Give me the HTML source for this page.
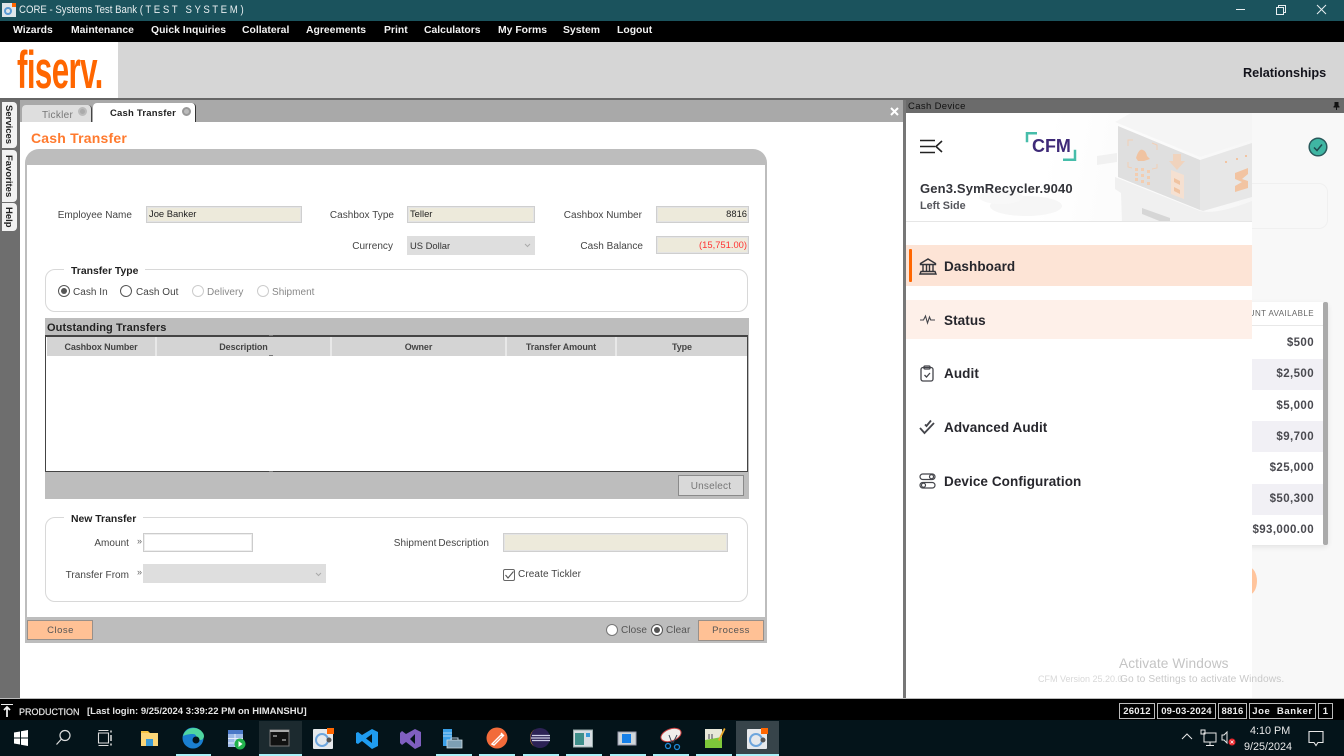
<!DOCTYPE html>
<html><head><meta charset="utf-8"><title>CORE</title>
<style>
html,body{margin:0;padding:0;width:1344px;height:756px;overflow:hidden;background:#fff;font-family:"Liberation Sans",sans-serif}
.a{position:absolute;box-sizing:border-box}
.t{position:absolute;white-space:nowrap;line-height:1}
.m{font-weight:bold;font-size:10.4px;color:#f2f2f2;top:26px}
.l{font-size:10px;color:#444;letter-spacing:.03px;top:0}
.r{text-align:right}
.f{position:absolute;box-sizing:border-box;background:#edeadb;border:1px solid #cfcfcf;box-shadow:0 0 0 1px #e4e4e4 inset;font-size:9.4px;color:#222;line-height:14px;padding:0 2px}
.sel{position:absolute;box-sizing:border-box;background:#dedede;font-size:9.4px;color:#333;line-height:19px;padding:0 3px}
.box{position:absolute;box-sizing:border-box;border:1.5px solid #d8d8d8;border-radius:10px;background:#fff}
.leg{position:absolute;background:#fff;font-weight:bold;font-size:10.4px;color:#222;padding:0 7px;line-height:12px;height:12px;border-radius:0 0 6px 6px}
.rad{position:absolute;width:12px;height:12px;box-sizing:border-box;border:1.4px solid #555;border-radius:50%;background:#fff}
.rad.on::after{content:"";position:absolute;left:1.6px;top:1.6px;width:6px;height:6px;border-radius:50%;background:#555}
.rad.off{border-color:#ccc}
.th{position:absolute;top:337px;height:19px;background:#d4d4d4;border-right:2px solid #e8e8e8;box-sizing:border-box;font-weight:bold;font-size:9px;letter-spacing:-.1px;color:#444;text-align:center;line-height:21px}
.btn{position:absolute;box-sizing:border-box;background:#ffc195;border:1.5px solid #98908a;font-size:9.5px;color:#555;letter-spacing:.5px;text-align:center;line-height:20px}
.nav{position:absolute;font-weight:bold;font-size:13.5px;color:#26262c;letter-spacing:.08px;line-height:1;white-space:nowrap;left:944px}
.amt{position:absolute;right:30px;font-weight:bold;font-size:11.5px;color:#4a4a50;letter-spacing:.4px;line-height:1;white-space:nowrap}
.sb{position:absolute;top:703px;height:16px;box-sizing:border-box;border:1px solid #bbb;color:#eee;font-weight:bold;font-size:9.5px;letter-spacing:.2px;text-align:center;line-height:15px;background:#000}
.ul{position:absolute;top:754px;height:2px;background:#a8f0f8}
svg{position:absolute;overflow:visible}
.st{writing-mode:vertical-rl;font-weight:bold;font-size:9.5px;color:#222;position:absolute;left:2px;width:15px;background:#f2f2f2;box-sizing:border-box;text-align:center;line-height:12px;padding-right:3px;border-radius:0 4px 4px 0}
</style></head><body>

<!-- title bar -->
<div class="a" style="left:0;top:0;width:1344px;height:21px;background:#1b535d"></div>
<div class="a" style="left:2px;top:3px;width:14px;height:14px;background:#dfe6ea"></div>
<div class="a" style="left:4px;top:7px;width:8px;height:8px;border:2px solid #5b9bd5;border-radius:50%"></div>
<div class="a" style="left:12px;top:3px;width:4px;height:4px;background:#f60"></div>
<div class="t" style="left:19px;top:5px;font-size:11px;color:#e8eef0;transform-origin:0 0;transform:scaleX(.875)">CORE - Systems Test Bank ( T E S T &nbsp; S Y S T E M )</div>
<svg style="left:0;top:0" width="1344" height="21" fill="none" stroke="#e8eef0" stroke-width="1">
<path d="M1236 9.5h9"/><path d="M1276.500 7.500h7v7h-7z M1278.500 7.500v-2h7v7h-2"/><path d="M1317 5l9 9M1326 5l-9 9"/></svg>

<!-- menu -->
<div class="a" style="left:0;top:21px;width:1344px;height:21px;background:#000"></div>
<div class="t m" style="left:13px">Wizards</div><div class="t m" style="left:71px">Maintenance</div><div class="t m" style="left:151px">Quick Inquiries</div><div class="t m" style="left:242px">Collateral</div><div class="t m" style="left:306px">Agreements</div><div class="t m" style="left:384px">Print</div><div class="t m" style="left:424px">Calculators</div><div class="t m" style="left:498px">My Forms</div><div class="t m" style="left:563px">System</div><div class="t m" style="left:617px">Logout</div>

<!-- header -->
<div class="a" style="left:0;top:42px;width:1344px;height:57px;background:#d6d6d6"></div>
<div class="a" style="left:0;top:42px;width:118px;height:57px;background:#fff"></div>
<div class="t" style="left:17px;top:44px;font-size:53px;font-weight:bold;color:#f60;letter-spacing:-1px;transform-origin:0 0;transform:scaleX(.59)">fiserv.</div>
<div class="t" style="left:1243px;top:66.500px;font-size:12.7px;font-weight:bold;color:#14141c">Relationships</div>
<div class="a" style="left:0;top:98px;width:1344px;height:2px;background:#666"></div>

<!-- left rail -->
<div class="a" style="left:0;top:100px;width:20px;height:599px;background:#6e6e6e"></div>
<div class="st" style="top:102px;height:46px">Services</div>
<div class="st" style="top:150px;height:52px">Favorites</div>
<div class="st" style="top:203px;height:28px">Help</div>

<!-- tab strip -->
<div class="a" style="left:20px;top:100px;width:883px;height:22px;background:#a9a9a9"></div>
<div class="a" style="left:22px;top:105px;width:70px;height:17px;background:#dedede;border-right:1px solid #444;border-radius:4px 4px 0 0"></div>
<div class="t" style="left:42px;top:111px;font-size:10px;color:#777;letter-spacing:.3px">Tickler</div>
<div class="a" style="left:78px;top:107px;width:9px;height:9px;border-radius:50%;background:#aaa;border:2px solid #bbb"></div>
<div class="a" style="left:93px;top:103px;width:103px;height:19px;background:#fff;border-right:1px solid #333;border-radius:4px 4px 0 0"></div>
<div class="t" style="left:110px;top:108.500px;font-size:9.5px;font-weight:bold;color:#222;letter-spacing:.2px">Cash Transfer</div>
<div class="a" style="left:182px;top:107px;width:9px;height:9px;border-radius:50%;background:#bbb;border:2px solid #999"></div>
<svg style="left:890px;top:107px" width="9" height="9" stroke="#fff" stroke-width="2"><path d="M1 1l7 7M8 1l-7 7"/></svg>

<!-- splitter -->
<div class="a" style="left:903px;top:100px;width:3px;height:599px;background:#777"></div>

<div class="t" style="left:31px;top:131px;font-size:14px;font-weight:bold;color:#ff7a2e;letter-spacing:.2px">Cash Transfer</div>

<!-- form frame -->
<div class="a" style="left:25px;top:149px;width:742px;height:494px;background:#bdbdbd;border-radius:14px 14px 0 0"></div>
<div class="a" style="left:27px;top:165px;width:738px;height:452px;background:#fff"></div>

<div class="t l r" style="left:40px;width:92px;top:210.500px">Employee Name</div>
<div class="f" style="left:146px;top:206px;width:156px;height:17px">Joe Banker</div>
<div class="t l r" style="left:310px;width:84px;top:210.500px">Cashbox Type</div>
<div class="f" style="left:407px;top:206px;width:128px;height:17px">Teller</div>
<div class="t l r" style="left:550px;width:92px;top:210.500px">Cashbox Number</div>
<div class="f r" style="left:656px;top:206px;width:93px;height:17px;padding-right:1px">8816</div>
<div class="t l r" style="left:340px;width:53px;top:241.500px">Currency</div>
<div class="sel" style="left:407px;top:236px;width:128px;height:19px">US Dollar</div>
<svg style="left:524px;top:243px" width="7" height="5" fill="none" stroke="#aaa"><path d="M1 1l2.500 2.500L6 1"/></svg>
<div class="t l r" style="left:560px;width:83px;top:241.500px">Cash Balance</div>
<div class="f r" style="left:656px;top:236px;width:93px;height:18px;color:#f33;padding-right:1px;line-height:15px">(15,751.00)</div>

<!-- transfer type -->
<div class="box" style="left:45px;top:269px;width:703px;height:43px"></div>
<div class="leg" style="left:64px;top:265.500px">Transfer Type</div>
<div class="rad on" style="left:58px;top:285px"></div><div class="t l" style="left:73px;top:287.500px">Cash In</div>
<div class="rad" style="left:120px;top:285px"></div><div class="t l" style="left:136px;top:287.500px">Cash Out</div>
<div class="rad off" style="left:192px;top:285px"></div><div class="t l" style="left:207px;top:287.500px;color:#888">Delivery</div>
<div class="rad off" style="left:257px;top:285px"></div><div class="t l" style="left:272px;top:287.500px;color:#888">Shipment</div>

<!-- outstanding -->
<div class="a" style="left:45px;top:318px;width:704px;height:181px;background:#bdbdbd"></div>
<div class="t" style="left:47px;top:323px;font-size:11px;font-weight:bold;color:#222;letter-spacing:.1px">Outstanding Transfers</div>
<div class="a" style="left:45px;top:335px;width:703px;height:137px;background:#fff;border:1px solid #444;border-top-width:2px"></div>
<div class="th" style="left:47px;width:110px">Cashbox Number</div>
<div class="th" style="left:157px;width:175px">Description</div>
<div class="th" style="left:332px;width:175px">Owner</div>
<div class="th" style="left:507px;width:110px">Transfer Amount</div>
<div class="th" style="left:617px;width:130px;border:none">Type</div>
<div class="a" style="left:269px;top:335px;width:4px;height:1px;background:#777"></div>
<div class="a" style="left:269px;top:355px;width:4px;height:1px;background:#777"></div>
<div class="a" style="left:269px;top:471px;width:4px;height:1px;background:#777"></div>
<div class="a" style="left:678px;top:475px;width:66px;height:21px;background:#d9d9d9;border:1.500px solid #8a8a8a;font-size:10px;color:#777;letter-spacing:.2px;text-align:center;line-height:21px">Unselect</div>

<!-- new transfer -->
<div class="box" style="left:45px;top:517px;width:703px;height:85px"></div>
<div class="leg" style="left:64px;top:513.500px">New Transfer</div>
<div class="t l r" style="left:80px;width:49px;top:538.500px">Amount</div>
<div class="t" style="left:137px;top:537px;font-size:9px;color:#666">»</div>
<div class="a" style="left:143px;top:533px;width:110px;height:19px;background:#fff;border:1px solid #ccc;box-shadow:0 0 0 1px #eee inset"></div>
<div class="t l r" style="left:50px;width:79px;top:570.500px">Transfer From</div>
<div class="t" style="left:137px;top:568px;font-size:9px;color:#666">»</div>
<div class="sel" style="left:143px;top:564px;width:183px;height:19px"></div>
<svg style="left:315px;top:572px" width="7" height="5" fill="none" stroke="#aaa"><path d="M1 1l2.500 2.500L6 1"/></svg>
<div class="t l r" style="left:380px;width:109px;top:538.500px;word-spacing:-1px;letter-spacing:.06px">Shipment Description</div>
<div class="f" style="left:503px;top:533px;width:225px;height:19px"></div>
<div class="a" style="left:503px;top:569px;width:12px;height:12px;background:#fff;border:1px solid #666;border-radius:2px"></div>
<svg style="left:503px;top:569px" width="12" height="12" fill="none" stroke="#555" stroke-width="1.100"><path d="M2.500 6l2.500 3 5.500-6.500"/></svg>
<div class="t l" style="left:518px;top:570px;letter-spacing:.1px">Create Tickler</div>

<!-- footer band -->
<div class="btn" style="left:27px;top:620px;width:68px;height:20px;padding-left:1px;width:66px">Close</div>
<div class="rad" style="left:606px;top:624px;border-color:#777"></div><div class="t l" style="left:621px;top:626px;color:#555;letter-spacing:.1px">Close</div>
<div class="rad on" style="left:651px;top:624px"></div><div class="t l" style="left:666px;top:626px;color:#555;letter-spacing:.1px">Clear</div>
<div class="btn" style="left:698px;top:620px;width:66px;height:21px">Process</div>

<!-- right panel -->
<div class="a" style="left:906px;top:100px;width:438px;height:13px;background:#6b6b6b"></div>
<div class="t" style="left:908px;top:101.500px;font-size:9.5px;color:#111;letter-spacing:.35px">Cash Device</div>
<svg style="left:1333px;top:102px" width="7" height="8" fill="#111"><path d="M1.500 0h4v3.500l1 1v1H4v2.500H3V5.500H.5v-1l1-1z"/></svg>
<div class="a" style="left:906px;top:113px;width:438px;height:586px;background:#f8f8f8"></div>

<div class="a" style="left:1252px;top:183px;width:76px;height:46px;border:1.500px solid #f0f0f0;border-left:none;border-radius:0 9px 9px 0"></div>
<svg style="left:1308px;top:137px" width="20" height="20"><circle cx="10" cy="10" r="8.800" fill="#3fb6a3" stroke="#2a5a5c" stroke-width="1.500"/><path d="M6 10.500l3 3 5-6" fill="none" stroke="#1f4a4e" stroke-width="1.500"/></svg>

<!-- table behind -->
<div class="a" style="left:1240px;top:302px;width:88px;height:243px;background:#fff;border-radius:4px;box-shadow:0 2px 6px rgba(0,0,0,.09)"></div>
<div class="a" style="left:1240px;top:325px;width:83px;height:1px;background:#e8e8e8"></div>
<div class="a" style="left:1240px;top:359px;width:83px;height:31px;background:#f1f0f5"></div>
<div class="a" style="left:1240px;top:421px;width:83px;height:31px;background:#f1f0f5"></div>
<div class="a" style="left:1240px;top:484px;width:83px;height:31px;background:#f1f0f5"></div>
<div class="a" style="left:1323px;top:302px;width:5px;height:243px;background:#aaa;border-radius:2px"></div>
<div class="t" style="left:1252px;top:310px;width:62px;overflow:hidden;font-size:8px;color:#666;letter-spacing:.4px;text-align:right;direction:rtl">AMOUNT AVAILABLE</div>
<div class="amt" style="top:338px">$500</div>
<div class="amt" style="top:369px">$2,500</div>
<div class="amt" style="top:400.500px">$5,000</div>
<div class="amt" style="top:432px">$9,700</div>
<div class="amt" style="top:463px">$25,000</div>
<div class="amt" style="top:494px">$50,300</div>
<div class="amt" style="top:525px">$93,000.00</div>
<div class="a" style="left:1240px;top:567px;width:17px;height:28px;background:#ffc49c;border-radius:50%"></div>

<!-- side nav -->
<div class="a" style="left:906px;top:113px;width:346px;height:586px;background:#fff"></div>
<div class="a" style="left:906px;top:113px;width:346px;height:109px;background:linear-gradient(100deg,#fff 40%,#f6f6f6 100%);border-bottom:1px solid #e6e6e6;overflow:hidden">
<svg style="left:0;top:0" width="346" height="109">
<ellipse cx="120" cy="93" rx="36" ry="10" fill="#f6f6f6"/>
<ellipse cx="95" cy="84" rx="22" ry="7" fill="#f8f8f8"/>
<path d="M191 43l20-3v9l-20 3z" fill="#f1f1f1"/>
<path d="M209 9L294 44 346 27V0H225z" fill="#f5f5f5"/>
<path d="M212 13L294 47V97L212 64z" fill="#dfdfdf"/>
<path d="M294 47L346 30V84L297 98 294 97z" fill="#e7e7e7"/>
<path d="M209 64L294 98Q310 102 346 88V109H216L215 80 209 76z" fill="#f0f0f0"/>
<path d="M236 95l28 10v4h-8l-20-8z" fill="#d6d6d6"/>
<g opacity=".85">
<g fill="none" stroke="#f5cdb0"><path d="M222 33v-6h5M246 30l5 2v5M222 49v5l4 1M251 51v4l-5 1"/></g>
<path d="M230 45q3-10 7-8 3 1 4 6l3 3-6 2h-6z" fill="#f4bf97"/>
<path d="M229 55h3v3h-3zM235 55h3v3h-3zM241 57h3v3h-3zM229 60h3v3h-3zM235 61h3v3h-3zM241 63h3v3h-3zM229 65h3v3h-3zM235 67h3v3h-3zM241 69h3v3h-3z" fill="#f7caa8"/>
<path d="M267 41h8v7h4l-8 9-8-9h4z" fill="#f3d2b8"/>
<path d="M265 57l13 5v24l-13-5z" fill="#f9e1cf"/>
<path d="M268 65l6 3v4l-6-3zM268 74l6 3v4l-6-3z" fill="#f4bf97"/>
<path d="M329 60l13-5v6l-6 5 6 2v7l-13 4v-6l7-4-7-3z" fill="#f4bf97"/>
<path d="M319 48h2v2h-2zM330 45h2v2h-2zM339 42h2v2h-2z" fill="#f4bf97"/>
</g>
</svg></div>

<svg style="left:919px;top:139px" width="26" height="15" fill="none" stroke="#222" stroke-width="1.500"><path d="M1 1.500h15M1 7.500h15M1 13.500h15"/><path d="M23 2l-6 5.500 6 5.500" stroke-width="1.600"/></svg>
<svg style="left:1025px;top:131px" width="52" height="30" fill="none" stroke="#46bdaa" stroke-width="2.500"><path d="M12 2.200H2v9"/><path d="M38 28.800h12v-10"/></svg>
<div class="t" style="left:1032px;top:137px;font-size:18.500px;font-weight:bold;color:#3f2a78;transform-origin:0 0;transform:scaleX(.97)">CFM</div>
<div class="t" style="left:920px;top:182px;font-size:13px;font-weight:bold;color:#33343a;letter-spacing:.15px">Gen3.SymRecycler.9040</div>
<div class="t" style="left:920px;top:200.500px;font-size:10.800px;font-weight:bold;color:#55565c">Left Side</div>

<div class="a" style="left:906px;top:245px;width:346px;height:41px;background:#fde4d6"></div>
<div class="a" style="left:909px;top:249px;width:3px;height:33px;background:#f60;border-radius:1px"></div>
<div class="a" style="left:906px;top:300px;width:346px;height:39px;background:#fef0e9"></div>
<div class="nav" style="top:259.500px">Dashboard</div>
<div class="nav" style="top:313.500px">Status</div>
<div class="nav" style="top:367px">Audit</div>
<div class="nav" style="top:421px">Advanced Audit</div>
<div class="nav" style="top:475px">Device Configuration</div>

<svg style="left:919px;top:258px" width="18" height="17" fill="none" stroke="#33343a" stroke-width="1.400"><path d="M1.500 5.500L9 1l7.500 4.500v1h-15z"/><path d="M4 7v6M7.500 7v6M10.500 7v6M14 7v6"/><path d="M2 13.500h14l1 2.500H1z"/></svg>
<svg style="left:919px;top:314px" width="17" height="11" fill="none" stroke="#44454b" stroke-width="1.100"><path d="M1 6h3.500l2-4 2 7 2-6 1.200 3H16"/></svg>
<svg style="left:920px;top:365px" width="14" height="17" fill="none" stroke="#44454b" stroke-width="1.300"><rect x="1" y="2.500" width="12" height="13.500" rx="2"/><rect x="4" y="1" width="6" height="3" rx="1"/><path d="M4.500 10l2 2 3.500-4"/></svg>
<svg style="left:919px;top:419px" width="17" height="16" fill="none" stroke="#44454b" stroke-width="1.800"><path d="M1 9l4.500 5L15 4"/><path d="M6 5.500l1.500 1.500L12 1.500"/></svg>
<svg style="left:919px;top:473px" width="17" height="16" fill="none" stroke="#44454b" stroke-width="1.200"><rect x="1" y="1" width="15" height="5.500" rx="2.700"/><circle cx="12.500" cy="3.700" r="2"/><rect x="1" y="9.500" width="15" height="5.500" rx="2.700"/><circle cx="4.500" cy="12.200" r="2"/></svg>

<!-- watermark -->
<div class="t" style="left:1038px;top:675px;font-size:9px;color:#d8d8d8">CFM Version 25.20.0</div>
<div class="t" style="left:1119px;top:657px;font-size:13.700px;color:#c4c4c4;letter-spacing:.1px">Activate Windows</div>
<div class="t" style="left:1120px;top:674.500px;font-size:10.200px;color:#c8c8c8;letter-spacing:.1px">Go to Settings to activate Windows.</div>

<!-- status bar -->
<div class="a" style="left:0;top:698px;width:1344px;height:1px;background:#bbb"></div>
<div class="a" style="left:0;top:699px;width:1344px;height:21px;background:#000"></div>
<svg style="left:1px;top:704px" width="12" height="14" fill="none" stroke="#eee"><path d="M0 .500h12"/><path d="M6 13V3M3 6l3-3 3 3" stroke-width="1.800"/></svg>
<div class="t" style="left:19px;top:708px;font-size:9px;color:#e4e4e4;-webkit-text-stroke:.2px #e4e4e4">PRODUCTION</div>
<div class="t" style="left:87px;top:707px;font-size:9.5px;font-weight:bold;color:#e4e4e4">[Last login: 9/25/2024 3:39:22 PM on HIMANSHU]</div>
<div class="sb" style="left:1119px;width:36px">26012</div>
<div class="sb" style="left:1157px;width:59px">09-03-2024</div>
<div class="sb" style="left:1218px;width:29px">8816</div>
<div class="sb" style="left:1249px;width:67px;letter-spacing:.6px">Joe &nbsp;Banker</div>
<div class="sb" style="left:1318px;width:15px">1</div>

<!-- taskbar -->
<div class="a" style="left:0;top:720px;width:1344px;height:36px;background:#04141a"></div>
<div class="a" style="left:259px;top:721px;width:43px;height:35px;background:#1c2a2f"></div>
<div class="a" style="left:736px;top:721px;width:43px;height:35px;background:#37444a"></div>
<div class="ul" style="left:176px;width:35px"></div><div class="ul" style="left:259px;width:43px"></div><div class="ul" style="left:436px;width:36px"></div><div class="ul" style="left:479px;width:36px"></div><div class="ul" style="left:523px;width:36px"></div><div class="ul" style="left:566px;width:36px"></div><div class="ul" style="left:610px;width:36px"></div><div class="ul" style="left:653px;width:36px"></div><div class="ul" style="left:696px;width:36px"></div><div class="ul" style="left:736px;width:43px"></div>

<svg style="left:0;top:720px" width="1344" height="36">
<path d="M14 12.500l6-1v6h-6zM21 11.300l7-1.300v7.500h-7zM14 18.500h6v6l-6-1zM21 18.500h7V26l-7-1.200z" fill="#fff"/>
<g fill="none" stroke="#ddd" stroke-width="1.200"><circle cx="65" cy="15.500" r="5"/><path d="M61.500 19l-5 5.500"/></g>
<g fill="none" stroke="#ddd" stroke-width="1.100"><path d="M98.500 13h10v10h-10zM98.500 10.500h10M98.500 25.500h10"/><path d="M111 10.500v2M111 15v6M111 23.500v2" stroke-width="1.500"/></g>
<path d="M141 11h7l2 2h-9z" fill="#f5c342"/><path d="M141 13h17v13h-17z" fill="#fbd678"/><path d="M146 19h7v7h-7z" fill="#3a9bd8"/>
<circle cx="193" cy="18" r="10.500" fill="#1a7fd0"/><path d="M183 16c2-9 15-11 20-3 2 3 1 7-3 7-5 0-2-6-7-6-4 0-8 1-10 2z" fill="#4fd6a0"/><circle cx="196" cy="20" r="3.500" fill="#04141a"/>
<path d="M228 10h15v17h-15z" fill="#9db9e8"/><path d="M228 10h15v4h-15z" fill="#4a78c8"/><path d="M228 18.500h15M228 23h15M235 14v13" stroke="#e6eefc"/><circle cx="240" cy="24" r="5.500" fill="#22b14c"/><path d="M238.500 21l4 3-4 3z" fill="#fff"/>
<rect x="270" y="10" width="19" height="16" fill="#111" stroke="#777"/><path d="M270 10h19v2h-19z" fill="#aaa"/><path d="M273 16h4M282 20h4" stroke="#ddd"/>
<rect x="313" y="9" width="20" height="20" rx="1" fill="#e6e9ec"/><circle cx="322" cy="20" r="6" fill="none" stroke="#6ea6dd" stroke-width="2"/><circle cx="329" cy="20" r="2.500" fill="#555"/><rect x="327" y="8" width="7" height="6" fill="#f60"/>
<path d="M372 9l6 3v14l-6 3-10-8-4 3-2-1V13l2-1 4 3zM372 14l-6 4.500 6 4.500z" fill="#1f9cf0"/>
<path d="M415 9l6 3v14l-6 3-9-7-4 3-2-2V13l2-2 4 3zM415 14l-5 5 5 5z" fill="#7f5fc0"/>
<path d="M443 9h9v17h-9z" fill="#3aa0e8"/><path d="M443 13h9M443 16h9" stroke="#cfe8fa" stroke-width=".8"/><path d="M447 20h15v8h-15z" fill="#7d9fb3" stroke="#d0dde5" stroke-width=".8"/><path d="M451 20v-2h7v2" fill="none" stroke="#bcd" />
<circle cx="497" cy="18" r="10.500" fill="#f26b3a"/><path d="M492 24l9-9 2 1-9 9zM501 13l3 3" stroke="#fff" stroke-width="1.400" fill="none"/>
<circle cx="540" cy="18" r="10" fill="#2c2255"/><path d="M530 18a10 10 0 0 1 5-9 11 11 0 0 0 0 18 10 10 0 0 1-5-9z" fill="#e7962a"/><path d="M532 15.500h18M531 18h19M532 20.500h18" stroke="#cfcfe8" stroke-width="1.200"/>
<rect x="573.500" y="10" width="19" height="17" fill="#d8dee2" stroke="#9aa"/><path d="M575 13h9v12h-9z" fill="#3f8f8a"/><path d="M586 13h4v4h-4z" fill="#3a9bd8"/>
<rect x="618" y="12" width="18" height="13" fill="#cfd6da" stroke="#99a"/><path d="M622 14h9v9h-9z" fill="#1680e8"/>
<ellipse cx="671" cy="15" rx="10.500" ry="6" transform="rotate(-20 671 15)" fill="#f0efec" stroke="#c84040"/><path d="M669 15l3 8M677 15l-4 8" stroke="#345" /><circle cx="668" cy="26" r="2.500" fill="none" stroke="#1f8ad8" stroke-width="1.300"/><circle cx="677" cy="27" r="2.500" fill="none" stroke="#1f8ad8" stroke-width="1.300"/>
<path d="M705 9h17v19h-17z" fill="#e8e8d8"/><path d="M705 20l17-3v11h-17z" fill="#7ec83a"/><path d="M718 20l6-12 1.500 1-6 12z" fill="#e8a82a"/><path d="M709 14v5M712 14v5" stroke="#445"/>
<rect x="747" y="9" width="20" height="20" rx="1" fill="#e6e9ec"/><circle cx="756" cy="20" r="6" fill="none" stroke="#6ea6dd" stroke-width="2"/><circle cx="763" cy="20" r="2.500" fill="#555"/><rect x="761" y="8" width="7" height="6" fill="#f60"/>
<g fill="none" stroke="#e8e8e8" stroke-width="1"><path d="M1182 19l5-5 5 5"/><path d="M1204 13h12v9h-12zM1210 22v3M1206 25.500h8"/><path d="M1201 10h4v4h-4z"/><path d="M1222 15h2l3-3v11l-3-3h-2z"/><path d="M1309 11.500h14v11h-5l-2 3-2-3h-5z" stroke-width="1.100"/></g>
<circle cx="1232" cy="22" r="3.500" fill="#e8262c"/><path d="M1230.500 20.500l3 3M1233.500 20.500l-3 3" stroke="#fff" stroke-width=".8"/>
</svg>
<div class="t" style="left:1250px;top:726px;font-size:10.800px;color:#e8e8e8">4:10 PM</div>
<div class="t" style="left:1244px;top:742px;font-size:10.800px;color:#e8e8e8">9/25/2024</div>
</body></html>
